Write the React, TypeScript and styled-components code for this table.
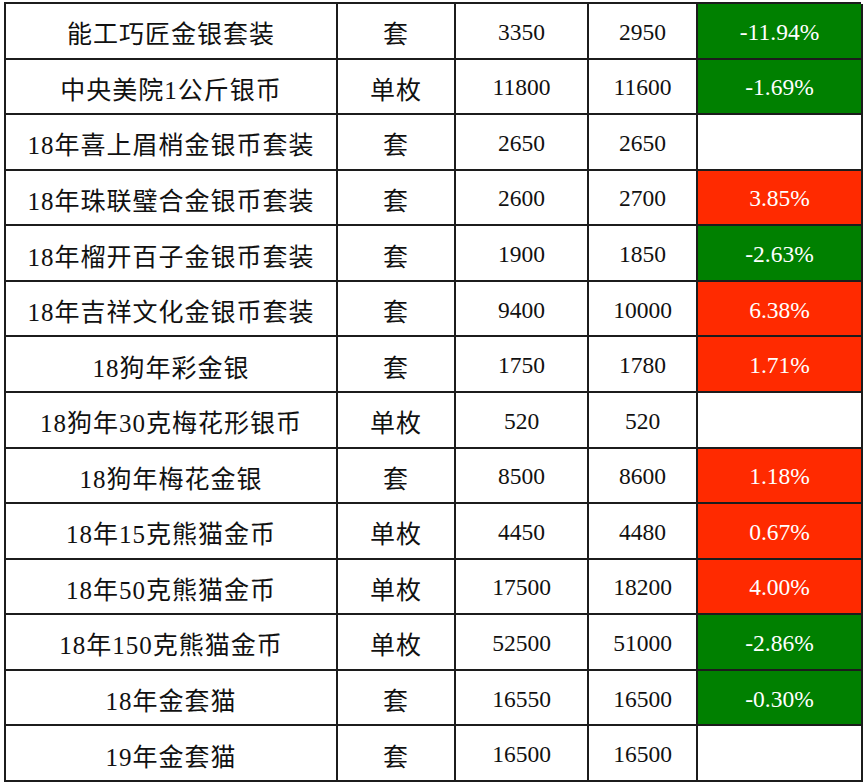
import React from "react";
import styled, { createGlobalStyle } from "styled-components";

const Global = createGlobalStyle`
  html, body { margin: 0; padding: 0; background: #ffffff; }
`;

const Page = styled.div`
  padding: 2px 0 0 4px;
`;

const Grid = styled.div`
  display: grid;
  grid-template-columns: 332px 118px 133px 109px 165px;
  grid-auto-rows: 55.57px;
  width: 857px;
  border-top: 2px solid #1c1c1c;
  border-left: 2px solid #1c1c1c;
  box-sizing: border-box;
`;

type Tone = "up" | "down" | "none";

const Cell = styled.div<{ $tone?: Tone; $cjk?: boolean }>`
  display: flex;
  align-items: center;
  justify-content: center;
  box-sizing: border-box;
  border-right: 2px solid #1c1c1c;
  border-bottom: 2px solid #1c1c1c;
  padding-top: 3px;
  font-family: "Liberation Serif", "Noto Sans CJK SC", serif;
  font-size: ${(p) => (p.$cjk ? "25px" : "23.5px")};
  letter-spacing: ${(p) => (p.$cjk ? "1px" : "0")};
  color: ${(p) => (p.$tone === "up" || p.$tone === "down" ? "#ffffff" : "#111111")};
  background: ${(p) =>
    p.$tone === "up" ? "#ff2a00" : p.$tone === "down" ? "#008000" : "#ffffff"};
  white-space: nowrap;
`;

const rows: [string, string, string, string, string][] = [
  ["能工巧匠金银套装", "套", "3350", "2950", "-11.94%"],
  ["中央美院1公斤银币", "单枚", "11800", "11600", "-1.69%"],
  ["18年喜上眉梢金银币套装", "套", "2650", "2650", ""],
  ["18年珠联璧合金银币套装", "套", "2600", "2700", "3.85%"],
  ["18年榴开百子金银币套装", "套", "1900", "1850", "-2.63%"],
  ["18年吉祥文化金银币套装", "套", "9400", "10000", "6.38%"],
  ["18狗年彩金银", "套", "1750", "1780", "1.71%"],
  ["18狗年30克梅花形银币", "单枚", "520", "520", ""],
  ["18狗年梅花金银", "套", "8500", "8600", "1.18%"],
  ["18年15克熊猫金币", "单枚", "4450", "4480", "0.67%"],
  ["18年50克熊猫金币", "单枚", "17500", "18200", "4.00%"],
  ["18年150克熊猫金币", "单枚", "52500", "51000", "-2.86%"],
  ["18年金套猫", "套", "16550", "16500", "-0.30%"],
  ["19年金套猫", "套", "16500", "16500", ""],
];

const toneOf = (v: string): Tone =>
  v === "" ? "none" : v.startsWith("-") ? "down" : "up";

export default function App() {
  return (
    <>
      <Global />
      <Page>
        <Grid>
          {rows.map((r, i) => (
            <React.Fragment key={i}>
              <Cell $cjk>{r[0]}</Cell>
              <Cell $cjk>{r[1]}</Cell>
              <Cell>{r[2]}</Cell>
              <Cell>{r[3]}</Cell>
              <Cell $tone={toneOf(r[4])}>{r[4]}</Cell>
            </React.Fragment>
          ))}
        </Grid>
      </Page>
    </>
  );
}
